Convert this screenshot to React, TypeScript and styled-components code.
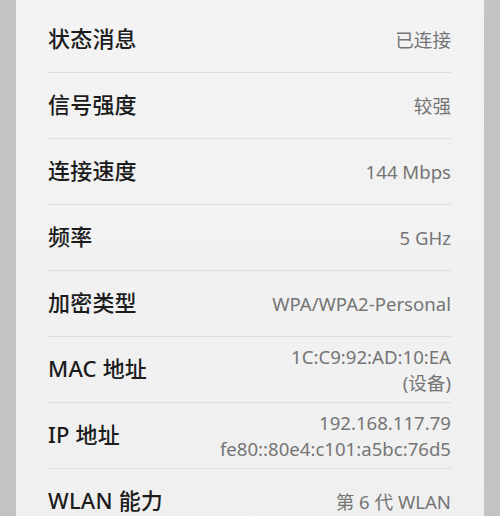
import styled, { createGlobalStyle } from "styled-components";

const GlobalStyle = createGlobalStyle`
  html, body {
    margin: 0;
    background: #c3c3c3;
  }
  body {
    font-family: "Noto Sans", "Noto Sans CJK SC", sans-serif;
  }
`;

const Card = styled.div`
  margin: 0 16px;
  padding: 7px 33px 0 32px;
  background: linear-gradient(#f3f3f3, #efefef);
  min-height: 600px;
  box-sizing: border-box;
`;

const Row = styled.div`
  display: flex;
  align-items: center;
  justify-content: space-between;
  height: 65px;
  border-bottom: 1px solid #dedede;
  &:last-child {
    border-bottom: none;
  }
`;

const Label = styled.div`
  font-size: 22px;
  line-height: 28px;
  padding-bottom: 3px;
  font-weight: 500;
  letter-spacing: 0.2px;
  color: #1c1c1c;
  white-space: nowrap;
`;

const Value = styled.div`
  font-size: 18.6px;
  line-height: 26px;
  color: #757575;
  text-align: right;
  white-space: nowrap;
`;

const rows: { label: string; value: string[] }[] = [
  { label: "状态消息", value: ["已连接"] },
  { label: "信号强度", value: ["较强"] },
  { label: "连接速度", value: ["144 Mbps"] },
  { label: "频率", value: ["5 GHz"] },
  { label: "加密类型", value: ["WPA/WPA2-Personal"] },
  { label: "MAC 地址", value: ["1C:C9:92:AD:10:EA", "(设备)"] },
  { label: "IP 地址", value: ["192.168.117.79", "fe80::80e4:c101:a5bc:76d5"] },
  { label: "WLAN 能力", value: ["第 6 代 WLAN"] },
];

export default function App() {
  return (
    <>
      <GlobalStyle />
      <Card>
        {rows.map((r) => (
          <Row key={r.label}>
            <Label>{r.label}</Label>
            <Value>
              {r.value.map((v) => (
                <div key={v}>{v}</div>
              ))}
            </Value>
          </Row>
        ))}
      </Card>
    </>
  );
}
